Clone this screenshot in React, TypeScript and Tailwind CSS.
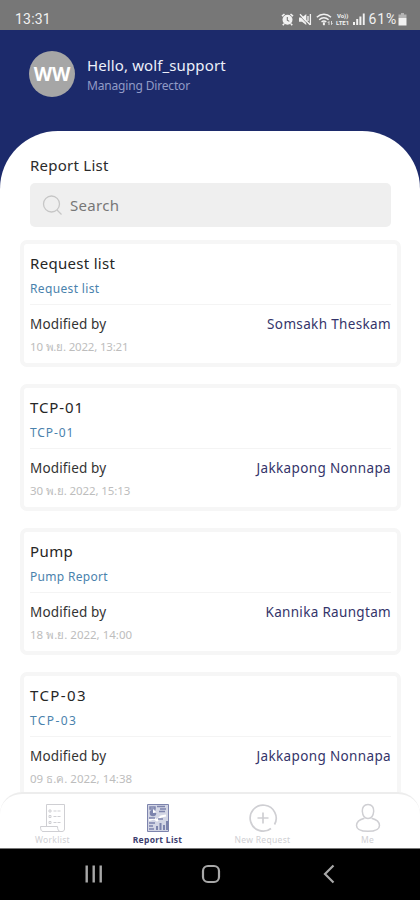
import type { ReactNode } from 'react';

interface Report {
  title: string;
  subtitle: string;
  modifiedBy: string;
  date: string;
  titleTracking: string;
  subtitleTracking: string;
  nameTracking: string;
  dateTracking: string;
}

const reports: Report[] = [
  { title: 'Request list', subtitle: 'Request list', modifiedBy: 'Somsakh Theskam', date: '10 พ.ย. 2022, 13:21', titleTracking: 'tracking-[0.3px]', subtitleTracking: 'tracking-[0.35px]', nameTracking: 'tracking-[0.35px]', dateTracking: 'tracking-[-0.2px]' },
  { title: 'TCP-01', subtitle: 'TCP-01', modifiedBy: 'Jakkapong Nonnapa', date: '30 พ.ย. 2022, 15:13', titleTracking: 'tracking-[0.9px]', subtitleTracking: 'tracking-[0.9px]', nameTracking: 'tracking-[0.36px]', dateTracking: 'tracking-[-0.1px]' },
  { title: 'Pump', subtitle: 'Pump Report', modifiedBy: 'Kannika Raungtam', date: '18 พ.ย. 2022, 14:00', titleTracking: 'tracking-[0.4px]', subtitleTracking: 'tracking-[0.3px]', nameTracking: 'tracking-[0.32px]', dateTracking: 'tracking-[0px]' },
  { title: 'TCP-03', subtitle: 'TCP-03', modifiedBy: 'Jakkapong Nonnapa', date: '09 ธ.ค. 2022, 14:38', titleTracking: 'tracking-[1.4px]', subtitleTracking: 'tracking-[1.4px]', nameTracking: 'tracking-[0.36px]', dateTracking: 'tracking-[0px]' },
];

function StatusBar() {
  return (
    <div className="flex h-[30px] shrink-0 items-center justify-between bg-[#777777] pl-[15px] pr-[13px] pt-[8px] font-['Roboto',sans-serif] text-[14px] text-[#f1f1f1]">
      <span className="tracking-[0.2px]">13:31</span>
      <div className="flex items-center">
        <svg width="13" height="13" viewBox="0 0 13 13" fill="none" stroke="currentColor">
          <circle cx="6.5" cy="6.8" r="5" fill="currentColor" stroke="none" />
          <path d="M1 3.2 3.5 1M12 3.2 9.5 1M3 10.7 1.8 12.2M10 10.7l1.2 1.5" strokeWidth="1.6" />
          <path d="M6.3 4v3.2l2 1.2" stroke="#777777" strokeWidth="1.1" />
        </svg>
        <svg className="ml-[4px]" width="14" height="13" viewBox="0 0 14 13" fill="none" stroke="currentColor">
          <path d="M1 4.5h3L8.3 1v11L4 8.8H1z" fill="currentColor" stroke="none" />
          <path d="M2 1.2l10 10.5M10 3v5M12.4 1v11" strokeWidth="1.3" />
          <path d="M1 2l9 9.5" stroke="#777777" strokeWidth="0.8" />
        </svg>
        <svg className="ml-[4px]" width="17" height="13" viewBox="0 0 17 13" fill="none" stroke="currentColor" strokeWidth="1.5">
          <path d="M.8 4.2c4.3-3.8 10-3.8 14.2 0M3.2 6.7c2.8-2.5 6.6-2.5 9.4 0M5.5 9c1.5-1.2 3.3-1.2 4.8 0" />
          <path d="M7.9 9.3v2.9" strokeWidth="2" />
          <path d="M13 12V8.5l-1.2 1.4M15.5 8v3.5l1-1.2" strokeWidth="0.8" />
        </svg>
        <div className="ml-[2px] flex w-[16px] flex-col items-center text-[6px] leading-[7px] font-bold">
          <span>Vo))</span>
          <span>LTE1</span>
        </div>
        <svg className="ml-[2px]" width="12" height="12" viewBox="0 0 12 12" fill="currentColor">
          <path d="M0 9h2v3H0zM3.2 6h2v6h-2zM6.4 3.5h2V12h-2zM9.8.5h1.9V12H9.8z" />
        </svg>
        <span className="ml-[4px] tracking-[0.8px]">61%</span>
        <svg className="ml-[1px]" width="9" height="13" viewBox="0 0 9 13" fill="currentColor">
          <path d="M3 0h3v1.5h2.5V5H.5V1.5H3z" opacity=".5" />
          <path d="M.5 5h8v7.5h-8z" />
        </svg>
      </div>
    </div>
  );
}

function Header() {
  return (
    <div className="flex h-[101px] shrink-0 items-start pl-[29px] pt-[21px]">
      <div className="flex size-[46px] items-center justify-center rounded-full bg-[#a6a6a6] font-['Noto_Sans'] text-[19px] font-bold text-white">
        WW
      </div>
      <div className="ml-[12px] flex flex-col pt-[3px]">
        <span className="text-[15px] leading-[22px] tracking-[0.12px] text-[#edf0fa]">Hello, wolf_support</span>
        <span className="text-[12px] leading-[20px] tracking-[-0.17px] text-[#929bc6]">Managing Director</span>
      </div>
    </div>
  );
}

function ReportCard({ report }: { report: Report }) {
  return (
    <div className="h-[127px] shrink-0 rounded-[7px] border-4 border-[#f6f6f6] bg-white px-[6px]">
      <div className="flex h-[61px] flex-col border-b border-[#f4f4f4] pt-[7px]">
        <span className={`text-[15px] leading-[24px] text-[#262626] ${report.titleTracking}`}>{report.title}</span>
        <span className={`text-[12px] leading-[27px] text-[#4a82ad] ${report.subtitleTracking}`}>{report.subtitle}</span>
      </div>
      <div className="flex items-center justify-between pt-[7px] text-[13.5px] leading-[24px]">
        <span className="tracking-[0.15px] text-[#333333]">Modified by</span>
        <span className={`text-[#34346a] ${report.nameTracking}`}>{report.modifiedBy}</span>
      </div>
      <span className={`block text-[11.5px] leading-[22px] text-[#bdbdbd] ${report.dateTracking}`}>{report.date}</span>
    </div>
  );
}

function NavItem({ label, active, children }: { label: string; active?: boolean; children: ReactNode }) {
  return (
    <div className={`flex w-[105px] flex-col items-center pt-[9px] ${active ? 'text-[#7d84ad]' : 'text-[#cfcfd3]'}`}>
      {children}
      <span className={`mt-[1px] text-[8.5px] leading-[11px] tracking-[0.3px] whitespace-nowrap ${active ? 'font-bold text-[#3e3f70]' : ''}`}>{label}</span>
    </div>
  );
}

function BottomNav() {
  return (
    <div className="flex h-[56px] shrink-0 rounded-t-[22px] border-t-2 border-[#ededed] bg-white">
      <NavItem label="Worklist">
        <svg width="28" height="30" viewBox="0 0 28 30" fill="none" stroke="currentColor" strokeWidth="1">
          <path d="M7.5 23V1.5h18V26c0 1.5-1 2.5-2.5 2.5H4C2.5 28.5 1.5 27 1.5 23.500h17c0 3 1 5 3 5" />
          <path d="M14.500 8h8M14.500 13.500h8M14.500 19.500h8" strokeDasharray="3 1" />
          <path d="M10 7h2v2h-2zM10 12.500h2v2h-2zM10 18.500h2v2h-2z" />
        </svg>
      </NavItem>
      <NavItem label="Report List" active>
        <svg width="22" height="30" viewBox="0 0 22 30" fill="none" stroke="currentColor">
          <path d="M.5 1.500h21v27H.5z" fill="#d3d6e5" strokeWidth="1" />
          <path d="M3 4h5v2H3zM10 3.500h8M13 6h6M12 8.500h6" strokeWidth="1.500" />
          <circle cx="6" cy="10" r="3.300" fill="currentColor" stroke="none" />
          <path d="M6 10V6l4 3.500z" fill="white" stroke="none" />
          <path d="M2 17l5-1.500 3 2 4-4 5-1" stroke="white" strokeWidth="2" />
          <path d="M2 15h6M11 16h5M2 20h6M2 23h4M2 26h5" strokeWidth="1.500" />
          <path d="M10 27v-4M13.500 27v-7M17 27v-5M20 27v-9" strokeWidth="2" />
        </svg>
      </NavItem>
      <NavItem label="New Request">
        <svg width="30" height="30" viewBox="0 0 30 30" fill="none" stroke="currentColor" strokeWidth="1.700">
          <path d="M23 25.500A13 13 0 1 1 26.500 21.500" />
          <path d="M15 9.500v11M9.500 15h11" />
        </svg>
      </NavItem>
      <NavItem label="Me">
        <svg width="26" height="30" viewBox="0 0 26 30" fill="none" stroke="currentColor" strokeWidth="1.500">
          <path d="M13 1.500c-4 0-6 3-5.700 6.800C7.600 12 9.500 15.500 13 15.500s5.400-3.500 5.700-7.200C19 4.500 17 1.500 13 1.500z" />
          <path d="M9.500 15.200C4.500 16.500 1.500 19 1.500 22.500c0 4 4.500 5.800 11.500 5.800s11.500-1.800 11.500-5.800c0-3.500-3-6-8-7.300" />
        </svg>
      </NavItem>
    </div>
  );
}

function SystemNav() {
  return (
    <div className="flex h-[52px] shrink-0 items-center border-t border-[#777777] bg-black pl-[84px] pb-[2px] text-[#a8a8a8]">
      <svg width="20" height="18" viewBox="0 0 20 18" fill="none" stroke="currentColor" strokeWidth="2.400">
        <path d="M2.700.5v17M9.700.5v17M16.700.5v17" />
      </svg>
      <svg className="ml-[97px]" width="20" height="20" viewBox="0 0 20 20" fill="none" stroke="currentColor" strokeWidth="2.200">
        <rect x="2" y="2" width="16" height="16" rx="5" />
      </svg>
      <svg className="ml-[102px]" width="12" height="20" viewBox="0 0 12 20" fill="none" stroke="currentColor" strokeWidth="2.200">
        <path d="M10.500 1.500L2 10l8.500 8.500" />
      </svg>
    </div>
  );
}

export default function App() {
  return (
    <div className="flex h-[900px] w-[420px] flex-col overflow-hidden bg-[#1c2a6b] font-['Noto_Sans',sans-serif]">
      <StatusBar />
      <Header />
      <div className="flex min-h-0 flex-1 flex-col overflow-hidden rounded-t-[58px] bg-white pt-[22px]">
        <h1 className="ml-[30px] text-[15px] leading-[24px] tracking-[0.25px] text-[#2b2b2b]">Report List</h1>
        <div className="ml-[30px] mt-[6px] flex h-[44px] w-[361px] shrink-0 items-center rounded-[5px] bg-[#efefef] pl-[12px]">
          <svg width="21" height="21" viewBox="0 0 21 21" fill="none" stroke="#c6c6c6" strokeWidth="1.300">
            <circle cx="9.500" cy="9" r="8" />
            <path d="M15 15l4.500 4.500" />
          </svg>
          <span className="ml-[7px] text-[15px] tracking-[0.3px] text-[#777777]">Search</span>
        </div>
        <div className="ml-[20px] mt-[13px] flex min-h-0 w-[381px] flex-1 flex-col gap-[17px] overflow-hidden">
          {reports.map((report, i) => (
            <ReportCard key={i} report={report} />
          ))}
        </div>
      </div>
      <div className="shrink-0 bg-white">
        <BottomNav />
      </div>
      <SystemNav />
    </div>
  );
}
